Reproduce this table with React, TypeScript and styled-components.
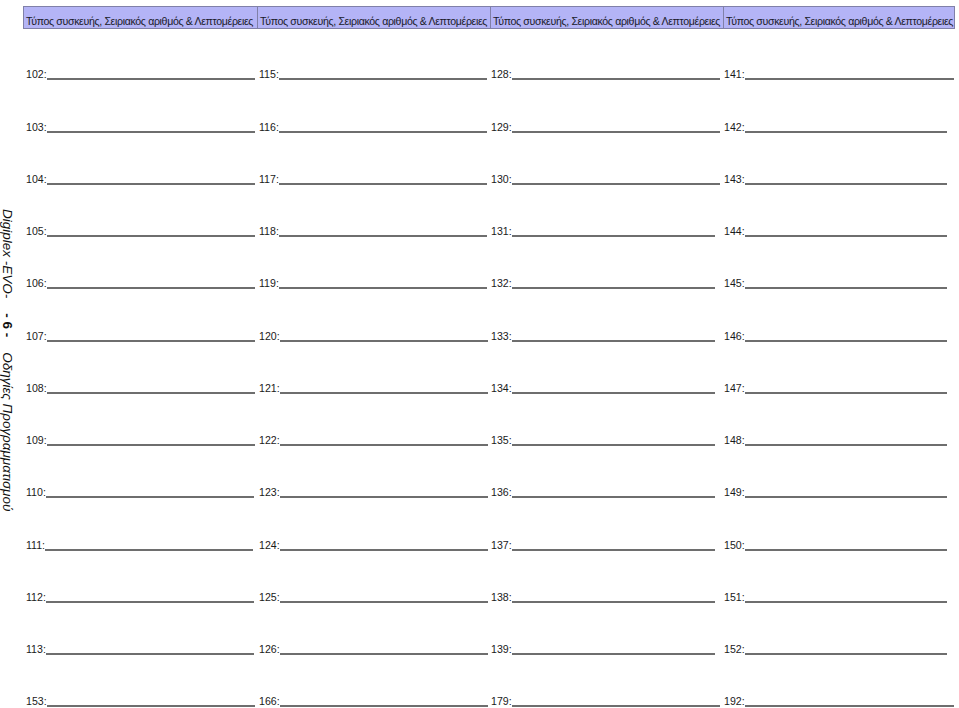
import React from "react";
import styled, { createGlobalStyle } from "styled-components";

const Global = createGlobalStyle`
  html, body { margin: 0; padding: 0; background: #fff; }
  body { font-family: "Liberation Sans", Arial, sans-serif; color: #1a1a1a; }
`;

const Page = styled.div`
  display: grid;
  grid-template-columns: 23px 932px;
  width: 959px;
  height: 708px;
  overflow: hidden;
`;

const Sidebar = styled.aside`
  display: flex;
  align-items: center;
  justify-content: flex-start;
  padding-top: 12px;
`;

const VerticalText = styled.div`
  writing-mode: vertical-rl;
  font-family: "Liberation Sans", Arial, sans-serif;
  font-size: 13.5px;
  color: #111;
  white-space: pre;
  line-height: 15px;
`;

const Italic = styled.span`
  font-style: italic;
`;

const Bold = styled.span`
  font-weight: bold;
`;

const Main = styled.main`
  display: flex;
  flex-direction: column;
  padding-top: 6px;
`;

const Header = styled.div`
  display: grid;
  grid-template-columns: repeat(4, 233px);
  background: #b4b4f6;
  border: 1px solid #8080a8;
  height: 23px;
  box-sizing: border-box;
`;

const HeaderCell = styled.div<{ $first?: boolean }>`
  display: flex;
  align-items: flex-end;
  padding: 0 0 0 2px;
  font-size: 10.6px;
  line-height: 13px;
  letter-spacing: -0.35px;
  color: #1a1a2a;
  white-space: nowrap;
  overflow: hidden;
  border-left: ${(p) => (p.$first ? "none" : "1px solid #8080a8")};
`;

const Rows = styled.div`
  display: grid;
  grid-auto-rows: 52.25px;
`;

const Row = styled.div`
  display: grid;
  grid-template-columns: repeat(4, 233px);
  align-items: end;
`;

const Cell = styled.div<{ $pad: number }>`
  padding-left: ${(p) => p.$pad}px;
  padding-bottom: 0;
  font-size: 10.6px;
  line-height: 13px;
  white-space: nowrap;
`;

const Label = styled.span`
  color: #1a1a1a;
`;

const Blank = styled.span<{ $w: number }>`
  display: inline-block;
  width: ${(p) => p.$w}px;
  height: 0;
  border-bottom: 2px solid #6e6e6e;
  vertical-align: -2px;
`;

const HEADER = "Τύπος συσκευής, Σειριακός αριθμός & Λεπτομέρειες";

const starts = [102, 115, 128, 141];
const lastRow = [153, 166, 179, 192];
const pads = [3, 3, 2, 2];

function widthFor(col: number, rowIdx: number, isLast: boolean): number {
  if (col === 0) return 208;
  if (col === 1) return 208;
  if (col === 2) return isLast || rowIdx < 3 ? 208 : 203;
  return isLast || rowIdx === 0 ? 209 : 202;
}

export default function App() {
  const rows: number[][] = [];
  for (let i = 0; i < 12; i++) rows.push(starts.map((s) => s + i));
  rows.push(lastRow);

  return (
    <>
      <Global />
      <Page>
        <Sidebar>
          <VerticalText>
            <Italic>Digiplex -EVO-</Italic>
            {"    "}
            <Bold>- 6 -</Bold>
            {"    "}
            <Italic>Οδηγίες Προγραμματισμού</Italic>
          </VerticalText>
        </Sidebar>
        <Main>
          <Header>
            {[0, 1, 2, 3].map((i) => (
              <HeaderCell key={i} $first={i === 0}>
                {HEADER}
              </HeaderCell>
            ))}
          </Header>
          <Rows>
            {rows.map((r, ri) => (
              <Row key={ri}>
                {r.map((n, ci) => (
                  <Cell key={n} $pad={pads[ci]}>
                    <Label>{n}:</Label>
                    <Blank $w={widthFor(ci, ri, ri === 12)} />
                  </Cell>
                ))}
              </Row>
            ))}
          </Rows>
        </Main>
      </Page>
    </>
  );
}
